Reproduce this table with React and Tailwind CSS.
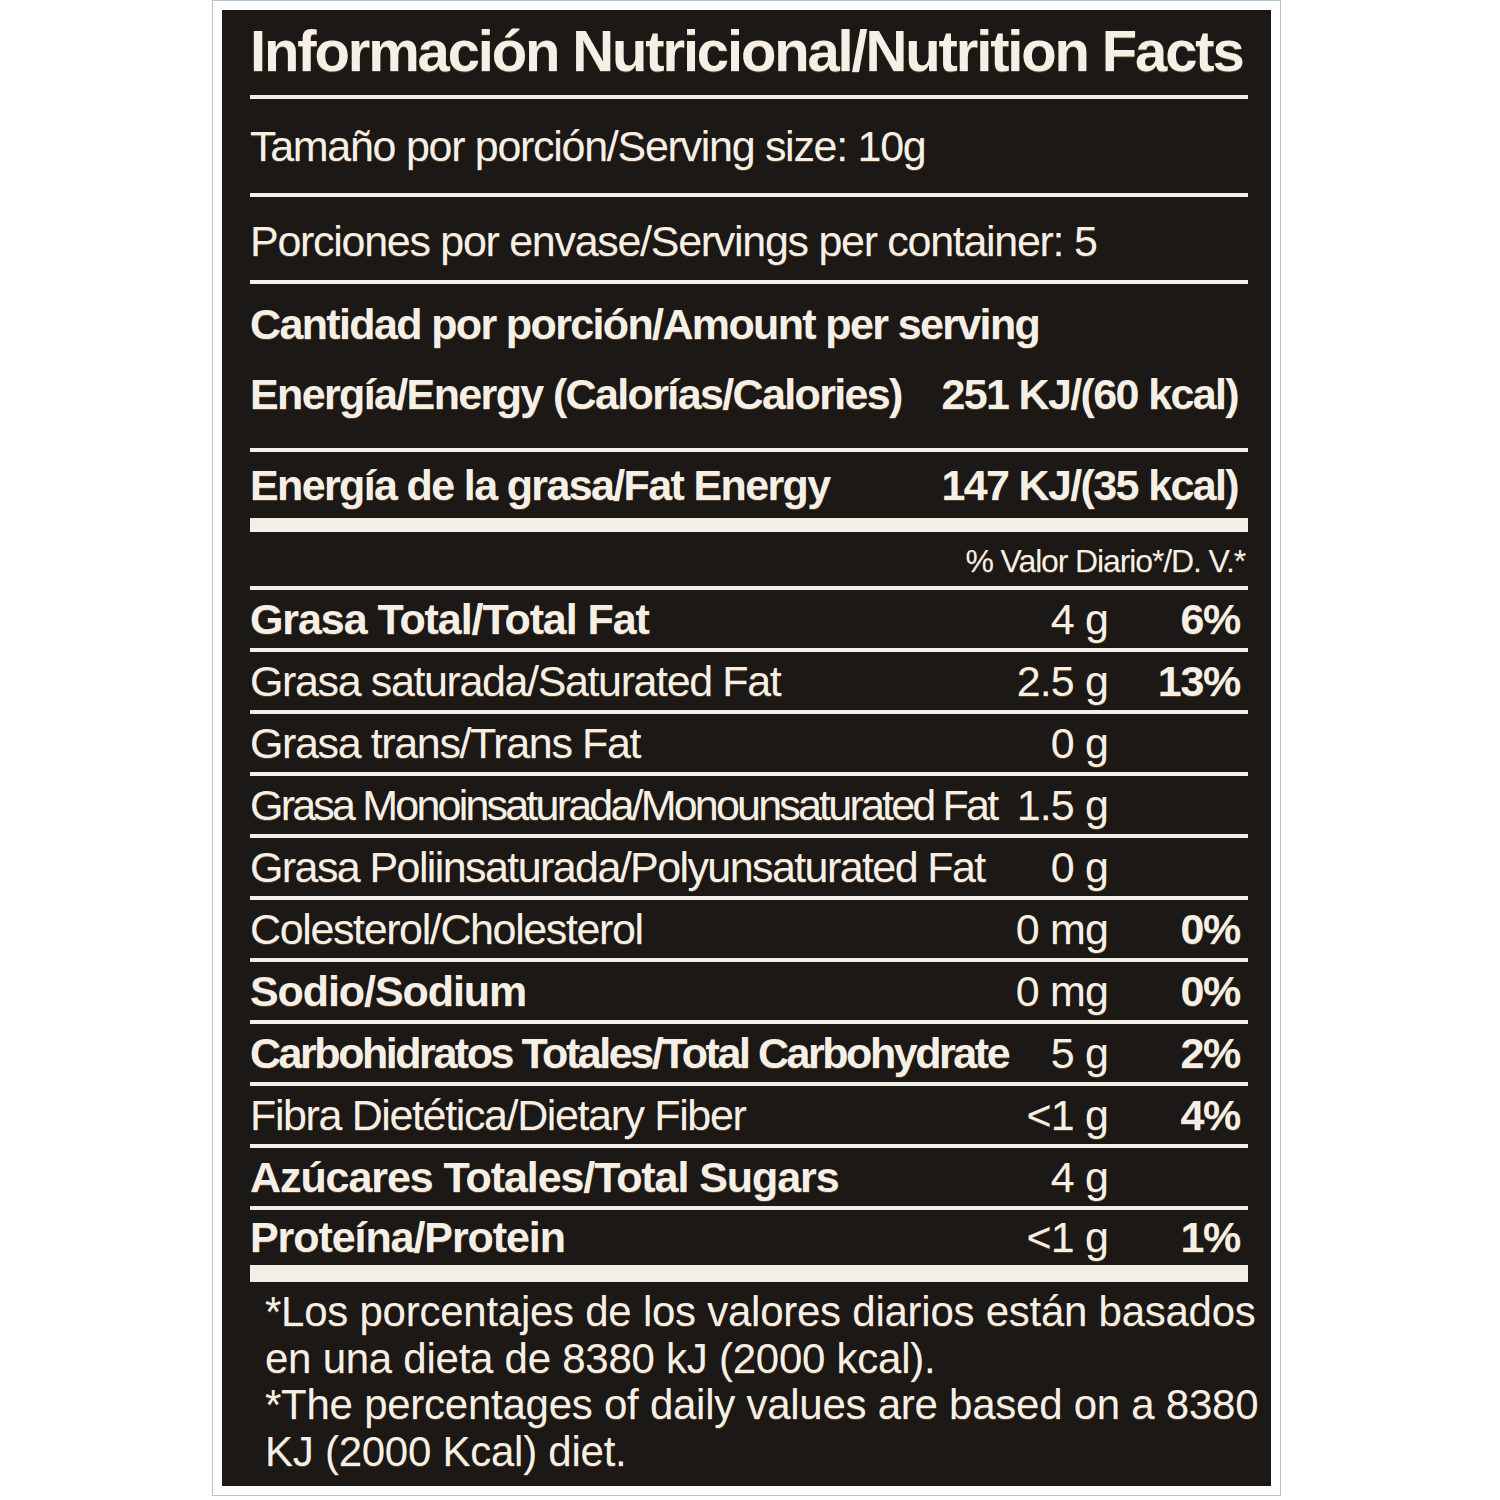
import React from "react";

const nutrients = [
    { label: "Grasa Total/Total Fat", bold: true, amount: "4 g", pct: "6%" },
    { label: "Grasa saturada/Saturated Fat", amount: "2.5 g", pct: "13%" },
    { label: "Grasa trans/Trans Fat", amount: "0 g" },
    { label: "Grasa Monoinsaturada/Monounsaturated Fat", tight: "tracking-[-0.065em]", amount: "1.5 g" },
    { label: "Grasa Poliinsaturada/Polyunsaturated Fat", tight: "tracking-[-0.037em]", amount: "0 g" },
    { label: "Colesterol/Cholesterol", amount: "0 mg", pct: "0%" },
    { label: "Sodio/Sodium", bold: true, amount: "0 mg", pct: "0%" },
    { label: "Carbohidratos Totales/Total Carbohydrate", bold: true, tight: "tracking-[-0.057em]", amount: "5 g", pct: "2%" },
    { label: "Fibra Dietética/Dietary Fiber", amount: "<1 g", pct: "4%" },
    { label: "Azúcares Totales/Total Sugars", bold: true, amount: "4 g" },
    { label: "Proteína/Protein", bold: true, amount: "<1 g", pct: "1%" },
];

const Rule = ({ h = "h-[4px]" }) => <div className={`${h} w-full bg-[#f3efe7]`}></div>;

const NutrientRow = ({ item, last }) => {
    const spacing = item.tight || (item.bold ? "tracking-[-0.025em]" : "tracking-[-0.032em]");
    return (
        <div className={`flex items-center ${last ? "h-[55px]" : "h-[58px]"} text-[43px] leading-none whitespace-nowrap`}>
            <div className={`flex-1 min-w-0 ${item.bold ? "font-bold" : "font-normal"} ${spacing}`}>
                {item.label}
            </div>
            <div className="w-[100px] text-right tracking-[-0.02em]">{item.amount}</div>
            <div className="w-[140px] pr-[8px] text-right font-bold tracking-[-0.03em]">{item.pct || ""}</div>
        </div>
    );
};

export default function App() {
    return (
        <div className="min-h-[1500px] w-[1500px] bg-white">
            {/* label frame */}
            <div className="ml-[212px] w-[1069px] border border-[#b4c4d6] bg-white p-[9px]">
                <div className="bg-[#1b1816] pl-[28px] pr-[23px] text-[#f4f0e8] font-['Liberation_Sans',Arial,sans-serif] [text-shadow:0_1px_0_rgba(190,110,40,0.45)]">
                    {/* Title */}
                    <div className="flex h-[85px] items-center pb-[3px] text-[58px] font-bold leading-none tracking-[-0.037em] whitespace-nowrap">
                        Información Nutricional/Nutrition Facts
                    </div>
                    <Rule />
                    <div className="flex h-[94px] items-center text-[43px] leading-none tracking-[-0.03em] whitespace-nowrap">
                        Tamaño por porción/Serving size: 10g
                    </div>
                    <Rule />
                    <div className="flex h-[83px] items-center pt-[6px] text-[43px] leading-none tracking-[-0.03em] whitespace-nowrap">
                        Porciones por envase/Servings per container: 5
                    </div>
                    <Rule />
                    <div className="flex h-[76px] items-center pt-[4px] text-[43px] font-bold leading-none tracking-[-0.038em] whitespace-nowrap">
                        Cantidad por porción/Amount per serving
                    </div>
                    <div className="flex h-[88px] items-center pb-[20px] text-[43px] font-bold leading-none tracking-[-0.038em] whitespace-nowrap">
                        <div className="flex-1">Energía/Energy (Calorías/Calories)</div>
                        <div className="pr-[10px]">251 KJ/(60 kcal)</div>
                    </div>
                    <Rule />
                    <div className="flex h-[66px] items-center text-[43px] font-bold leading-none tracking-[-0.038em] whitespace-nowrap">
                        <div className="flex-1">Energía de la grasa/Fat Energy</div>
                        <div className="pr-[10px]">147 KJ/(35 kcal)</div>
                    </div>
                    <Rule h="h-[14px]" />
                    <div className="flex h-[54px] items-center justify-end pt-[4px] pr-[3px] text-[32px] leading-none tracking-[-0.035em] whitespace-nowrap">
                        % Valor Diario*/D. V.*
                    </div>
                    <Rule />

                    {/* Nutrient table */}
                    {nutrients.map((item, i) => (
                        <div key={item.label}>
                            <NutrientRow item={item} last={i === nutrients.length - 1} />
                            {i < nutrients.length - 1 ? <Rule /> : <Rule h="h-[17px]" />}
                        </div>
                    ))}

                    {/* Footnote */}
                    <div className="-mr-[14px] pl-[15px] pt-[7px] pb-[11px] text-[42px] leading-[46.5px] tracking-[-0.006em] whitespace-nowrap">
                        *Los porcentajes de los valores diarios están basados<br />
                        en una dieta de 8380 kJ (2000 kcal).<br />
                        *The percentages of daily values are based on a 8380<br />
                        KJ (2000 Kcal) diet.
                    </div>
                </div>
            </div>
        </div>
    );
}
